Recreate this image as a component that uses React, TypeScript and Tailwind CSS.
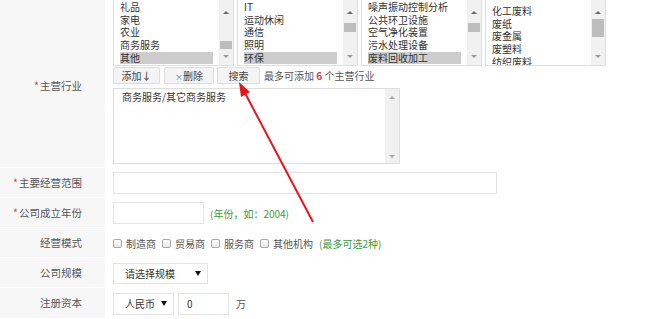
import React from 'react';

type ListBoxProps = {
  items: string[];
  selected?: number;
  padTop: number;
  thumbTop: number;
  thumbH: number;
};

const Tri = ({ up, color = 'border-b-[#777]' }: { up?: boolean; color?: string }) =>
  up ? (
    <span className={`block w-0 h-0 border-l-[3px] border-r-[3px] border-b-[3px] border-l-transparent border-r-transparent ${color}`} />
  ) : (
    <span className={`block w-0 h-0 border-l-[3px] border-r-[3px] border-t-[3px] border-l-transparent border-r-transparent ${color}`} />
  );

const ListBox = ({ items, selected, padTop, thumbTop, thumbH }: ListBoxProps) => (
  <div className="flex w-[121px] h-[66px] border-x border-b border-[#dedede] bg-white">
    <div className="flex-1 overflow-hidden px-[6px]" style={{ paddingTop: padTop }}>
      {items.map((item, index) => (
        <div
          key={item + index}
          className={`h-[12.7px] leading-[12.7px] text-[10px] text-[#333] whitespace-nowrap ${
            index === selected ? 'bg-[#cdcdcd]' : ''
          }`}
        >
          {item}
        </div>
      ))}
    </div>
    <div className="flex flex-col w-[14px] bg-[#f1f1f1]">
      <div className="h-[17px] flex items-end justify-center pb-[3px]">
        <Tri up color="border-b-[#666]" />
      </div>
      <div className="flex-1 px-[1px]" style={{ paddingTop: thumbTop }}>
        <div className="bg-[#bdbdbd]" style={{ height: thumbH }} />
      </div>
      <div className="h-[17px] flex items-center justify-center">
        <Tri color="border-t-[#999]" />
      </div>
    </div>
  </div>
);

const Label = ({ text, required, className }: { text: string; required?: boolean; className?: string }) => (
  <div
    className={`flex items-center justify-end pr-[23px] bg-[#f7f7f7] border-b border-white text-[10.5px] text-[#555] ${className ?? ''}`}
  >
    {required && <span className="text-[#e4393c] mr-[1px]">*</span>}
    {text}
  </div>
);

const Checkbox = ({ label }: { label: string }) => (
  <div className="flex items-center mr-[6px]">
    <span className="block w-[9px] h-[9px] border border-[#a8a8a8] rounded-[2px] bg-gradient-to-b from-white to-[#e8e8e8]" />
    <span className="ml-[4px] text-[10px] text-[#555]">{label}</span>
  </div>
);

const SelectBox = ({ text, className }: { text: string; className: string }) => (
  <div className={`flex items-center justify-between border border-[#e3e3e3] bg-white pl-[11px] pr-[6px] ${className}`}>
    <span className="text-[10px] text-[#333]">{text}</span>
    <span className="block w-0 h-0 border-l-[3px] border-r-[3px] border-t-[5px] border-l-transparent border-r-transparent border-t-[#111]" />
  </div>
);

export default function App() {
  return (
    <div className="relative w-[650px] h-[319px] overflow-hidden bg-white font-['Noto_Sans_CJK_SC',sans-serif]">
      <div className="grid grid-cols-[105px_1fr]">
        <Label text="主营行业" required className="h-[168px] pt-[4px]" />
        <div className="flex flex-col pl-[8px]">
          <div className="flex gap-[3px]">
            <ListBox items={['礼品', '家电', '农业', '商务服务', '其他']} selected={4} padTop={1} thumbTop={24} thumbH={8} />
            <ListBox items={['IT', '运动休闲', '通信', '照明', '环保']} selected={4} padTop={1} thumbTop={6} thumbH={9} />
            <ListBox
              items={['噪声振动控制分析', '公共环卫设施', '空气净化装置', '污水处理设备', '废料回收加工']}
              selected={4}
              padTop={1}
              thumbTop={6}
              thumbH={9}
            />
            <ListBox items={['化工废料', '废纸', '废金属', '废塑料', '纺织废料']} padTop={5} thumbTop={2} thumbH={18} />
          </div>
          <div className="flex items-center mt-[1px] h-[17px]">
            <button className="w-[47px] h-[17px] border border-[#dcdcdc] bg-[#f4f4f4] rounded-[2px] text-[10px] text-[#444]">
              添加<b className="text-[#666]">↓</b>
            </button>
            <button className="ml-[4px] w-[50px] h-[17px] border border-[#dcdcdc] bg-[#f4f4f4] rounded-[2px] text-[10px] text-[#444]">
              <span className="text-[8px] text-[#777]">×</span>删除
            </button>
            <button className="ml-[3px] w-[43px] h-[17px] border border-[#dcdcdc] bg-[#f4f4f4] rounded-[2px] text-[10px] text-[#444]">
              搜索
            </button>
            <span className="ml-[4px] text-[10px] text-[#555]">
              最多可添加 <b className="text-[#e4393c]">6</b> 个主营行业
            </span>
          </div>
          <div className="flex mt-[4px] w-[287px] h-[76px] border border-[#dedede] bg-white">
            <div className="flex-1 pl-[8px] text-[10px] text-[#333] leading-[15px]">商务服务/其它商务服务</div>
            <div className="flex flex-col justify-between w-[14px] bg-[#f1f1f1] pt-[7px] pb-[5px] items-center">
              <Tri up color="border-b-[#aaa]" />
              <Tri color="border-t-[#aaa]" />
            </div>
          </div>
        </div>

        <Label text="主要经营范围" required className="h-[30px]" />
        <div className="flex items-center pl-[8px]">
          <div className="w-[384px] h-[22px] border border-[#e3e3e3] bg-white" />
        </div>

        <Label text="公司成立年份" required className="h-[30px]" />
        <div className="flex items-center pl-[8px]">
          <div className="w-[91px] h-[22px] border border-[#e3e3e3] bg-white" />
          <span className="ml-[6px] text-[10px] text-[#3c9a3c]">(年份，如：2004)</span>
        </div>

        <Label text="经营模式" className="h-[30px]" />
        <div className="flex items-center pl-[8px]">
          <Checkbox label="制造商" />
          <Checkbox label="贸易商" />
          <Checkbox label="服务商" />
          <Checkbox label="其他机构" />
          <span className="text-[10px] text-[#3c9a3c]">(最多可选2种)</span>
        </div>

        <Label text="公司规模" className="h-[30px]" />
        <div className="flex items-center pl-[8px]">
          <SelectBox text="请选择规模" className="w-[95px] h-[21px]" />
        </div>

        <Label text="注册资本" className="h-[31px]" />
        <div className="flex items-center pl-[8px]">
          <SelectBox text="人民币" className="w-[61px] h-[22px]" />
          <div className="ml-[4px] w-[51px] h-[22px] border border-[#e3e3e3] bg-white flex items-center pl-[8px] text-[10px] text-[#333]">
            0
          </div>
          <span className="ml-[7px] text-[10px] text-[#555]">万</span>
        </div>
      </div>

      <svg className="absolute left-0 top-0 pointer-events-none" width="650" height="319" viewBox="0 0 650 319">
        <line x1="313" y1="222" x2="245" y2="93" stroke="#e8141b" strokeWidth="2" />
        <polygon points="239,82 241,97 250,92" fill="#e8141b" />
      </svg>
    </div>
  );
}
